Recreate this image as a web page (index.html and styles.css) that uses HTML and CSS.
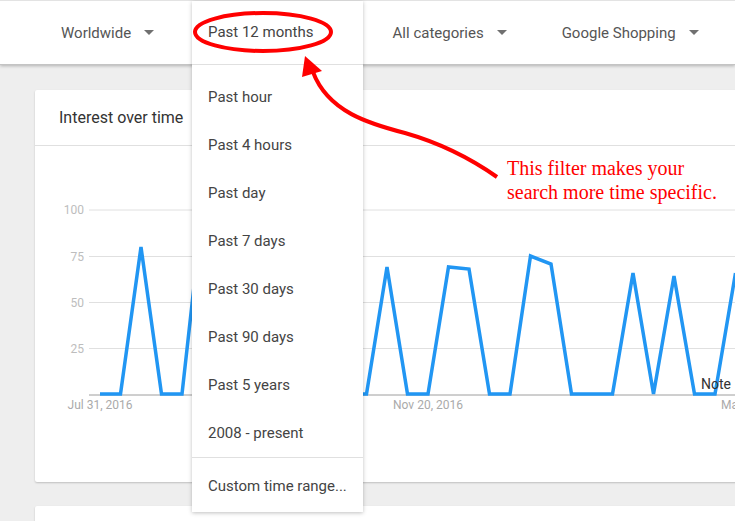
FILE: index.html
```html
<!DOCTYPE html>
<html lang="en">
<head>
  <meta charset="UTF-8">
  <title>Google Trends - Interest over time</title>
  <link rel="stylesheet" href="styles.css">
</head>
<body>

  <!-- Filtros no topo -->
  <header class="filters">
    <div class="filter"><span>Worldwide</span><i class="caret"></i></div>
    <div class="filter filter-open"><span>Past 12 months</span><i class="caret"></i></div>
    <div class="filter"><span>All categories</span><i class="caret"></i></div>
    <div class="filter"><span>Google Shopping</span><i class="caret"></i></div>
  </header>

  <main class="content">
    <section class="card">
      <div class="card-title">Interest over time</div>
      <svg class="chart" width="700" height="336" viewBox="35 146 700 336">
        <g class="grid">
          <line x1="89" y1="210" x2="735" y2="210"></line>
          <line x1="89" y1="256.5" x2="735" y2="256.5"></line>
          <line x1="89" y1="302.5" x2="735" y2="302.5"></line>
          <line x1="89" y1="348.5" x2="735" y2="348.5"></line>
        </g>
        <line class="baseline" x1="89" y1="395" x2="735" y2="395"></line>
        <g class="ylabels">
          <text x="84" y="214">100</text>
          <text x="84" y="261">75</text>
          <text x="84" y="307">50</text>
          <text x="84" y="353">25</text>
        </g>
        <g class="xlabels">
          <text x="100" y="409">Jul 31, 2016</text>
          <text x="428" y="409">Nov 20, 2016</text>
          <text x="756" y="409">Mar 12, 2017</text>
        </g>
        <polyline class="series" points="100,394 120.5,394 141,247 161.5,394 182,394 202.5,210 223,394 243.5,394 264,394 284.5,394 305,394 325.5,394 346,394 366.5,394 387,267 407.5,394 428,394 448.5,267 469,269 489.5,394 510,394 530.5,256 551,264 571.5,394 592,394 612.5,394 633,273 653.5,394 674,276 694.5,394 715,394 735.5,273"></polyline>
        <text class="note" x="701" y="389">Note</text>
      </svg>
    </section>
    <section class="card card-next"></section>
  </main>

  <!-- Menu aberto do filtro de tempo -->
  <div class="menu">
    <div class="menu-current">Past 12 months</div>
    <ul class="menu-list">
      <li>Past hour</li>
      <li>Past 4 hours</li>
      <li>Past day</li>
      <li>Past 7 days</li>
      <li>Past 30 days</li>
      <li>Past 90 days</li>
      <li>Past 5 years</li>
      <li>2008 - present</li>
    </ul>
    <ul class="menu-list menu-custom">
      <li>Custom time range...</li>
    </ul>
  </div>

  <!-- Anotação -->
  <svg class="annotation" width="735" height="521" viewBox="0 0 735 521">
    <ellipse cx="263" cy="32" rx="68" ry="19"></ellipse>
    <path d="M497,177 C470,158 440,143 405,133 C370,124 328,112 313,72"></path>
    <polygon points="305,56 302,77 322,71"></polygon>
  </svg>
  <div class="note-text">This filter makes your<br>search more time specific.</div>

</body>
</html>
```

FILE: styles.css
```css
body {
  margin: 0;
  background: #eeeeee;
  font-family: Roboto, "Liberation Sans", sans-serif;
  width: 735px;
  height: 521px;
  overflow: hidden;
  position: relative;
}

/* Barra de filtros */
.filters {
  display: flex;
  align-items: center;
  height: 63px;
  padding-left: 61px;
  background: #fff;
  border-top: 1px solid #e3e3e3;
  border-bottom: 1px solid #c4c4c4;
  box-shadow: 0 1px 3px rgba(0,0,0,0.25);
  position: relative;
  z-index: 1;
}

.filter {
  display: flex;
  align-items: center;
  flex-shrink: 0;
  gap: 13px;
  margin-right: 55px;
  font-size: 15px;
  color: #555;
  white-space: nowrap;
}

.filter-open {
  visibility: hidden;
}

.caret {
  width: 0;
  height: 0;
  border-left: 5px solid transparent;
  border-right: 5px solid transparent;
  border-top: 5px solid #707070;
}

/* Cartões */
.content {
  padding-top: 25px;
}

.card {
  margin-left: 35px;
  width: 720px;
  background: #fff;
  border-radius: 2px;
  box-shadow: 0 1px 2px rgba(0,0,0,0.2);
}

.card-title {
  height: 55px;
  line-height: 55px;
  padding-left: 24px;
  font-size: 16px;
  color: #333;
  border-bottom: 1px solid #e0e0e0;
}

.chart {
  display: block;
}

.grid line {
  stroke: #e0e0e0;
  stroke-width: 1;
}

.baseline {
  stroke: #9e9e9e;
  stroke-width: 1;
}

.ylabels text {
  font-size: 12px;
  fill: #bdbdbd;
  text-anchor: end;
}

.xlabels text {
  font-size: 12px;
  fill: #aaa;
  text-anchor: middle;
}

.series {
  fill: none;
  stroke: #2196f3;
  stroke-width: 3.5;
}

.note {
  font-size: 14px;
  fill: #333;
}

.card-next {
  margin-top: 24px;
  height: 60px;
}

/* Menu */
.menu {
  position: absolute;
  left: 192px;
  top: 1px;
  width: 171px;
  background: #fff;
  box-shadow: 0 1px 4px rgba(0,0,0,0.25);
  z-index: 2;
  font-size: 15px;
  color: #444;
}

.menu-current {
  height: 63px;
  line-height: 63px;
  padding-left: 16px;
  border-bottom: 1px solid #e0e0e0;
}

.menu-list {
  list-style: none;
  margin: 0;
  padding: 8px 0 0;
}

.menu-list li {
  height: 48px;
  line-height: 48px;
  padding-left: 16px;
}

.menu-custom {
  border-top: 1px solid #e0e0e0;
  padding: 4px 0 2px;
}

/* Anotação a vermelho */
.annotation {
  position: absolute;
  left: 0;
  top: 0;
  z-index: 3;
  pointer-events: none;
}

.annotation ellipse,
.annotation path {
  fill: none;
  stroke: #f00;
  stroke-width: 4;
}

.annotation polygon {
  fill: #f00;
}

.note-text {
  position: absolute;
  left: 507px;
  top: 156px;
  z-index: 3;
  font-family: "Liberation Serif", serif;
  font-size: 20px;
  line-height: 24px;
  color: #f00;
}
```
